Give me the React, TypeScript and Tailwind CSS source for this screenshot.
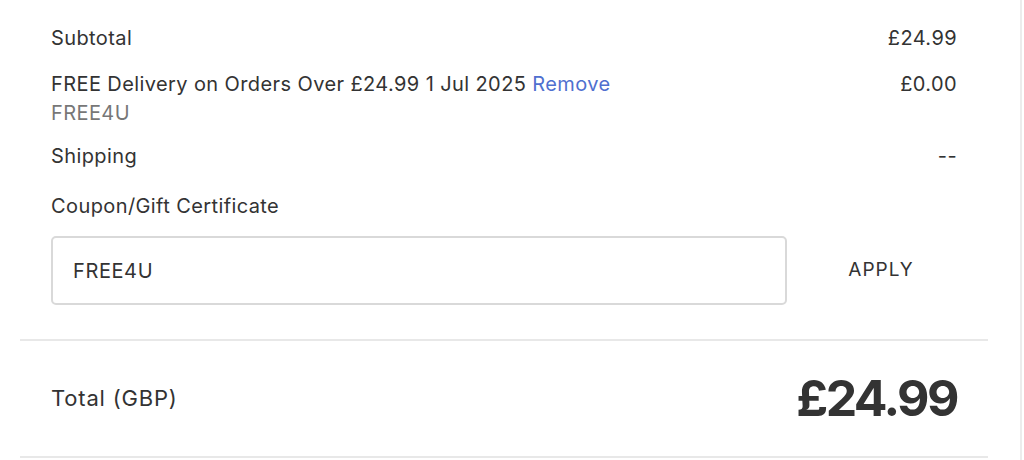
import React from "react";

export default function App() {
  return (
    <div
      className="w-[1024px] h-[460px] bg-white overflow-hidden flex text-[#333333]"
      style={{ fontFamily: "Inter, 'Noto Sans', sans-serif" }}
    >
      <div className="w-[1022px] border-r-2 border-[#ececec] flex">
        <div className="ml-[20px] w-[968px] flex flex-col">
          <div className="px-[31px] pt-[26px] flex flex-col">
            <div className="flex justify-between items-center h-[24px] text-[20px] tracking-[0.4px] leading-[24px]">
              <span>Subtotal</span>
              <span>£24.99</span>
            </div>
            <div className="mt-[20px] flex justify-between text-[20px] tracking-[0.4px] leading-[29px]">
              <div className="flex flex-col">
                <span>
                  FREE Delivery on Orders Over £24.99 1 Jul 2025{" "}
                  <a className="text-[#4f70cf] cursor-pointer">Remove</a>
                </span>
                <span className="text-[#777777]">FREE4U</span>
              </div>
              <span>£0.00</span>
            </div>
            <div className="mt-[16px] flex justify-between items-center h-[24px] text-[20px] tracking-[0.4px]">
              <span>Shipping</span>
              <span>--</span>
            </div>
            <div className="mt-[26px] h-[24px] flex items-center text-[20px] tracking-[0.4px]">
              <span>Coupon/Gift Certificate</span>
            </div>
            <div className="mt-[18px] flex items-center">
              <input
                readOnly
                value="FREE4U"
                className="w-[736px] shrink-0 h-[69px] border-2 border-[#d9d9d9] rounded-[5px] px-[20px] text-[20px] tracking-[0.6px] text-[#333333] outline-none"
                style={{ fontFamily: "Inter, 'Noto Sans', sans-serif" }}
              />
              <button className="w-[188px] shrink-0 h-[69px] text-center text-[19px] text-[#333333] tracking-[1px]">
                APPLY
              </button>
            </div>
          </div>
          <div className="mt-[34px] h-[2px] bg-[#e8e8e8]" />
          <div className="px-[31px] h-[115px] flex justify-between items-center">
            <span className="text-[22px] tracking-[0.8px]">Total (GBP)</span>
            <span className="text-[50px] font-bold tracking-[-2.5px]">£24.99</span>
          </div>
          <div className="h-[2px] bg-[#e8e8e8]" />
        </div>
      </div>
    </div>
  );
}
